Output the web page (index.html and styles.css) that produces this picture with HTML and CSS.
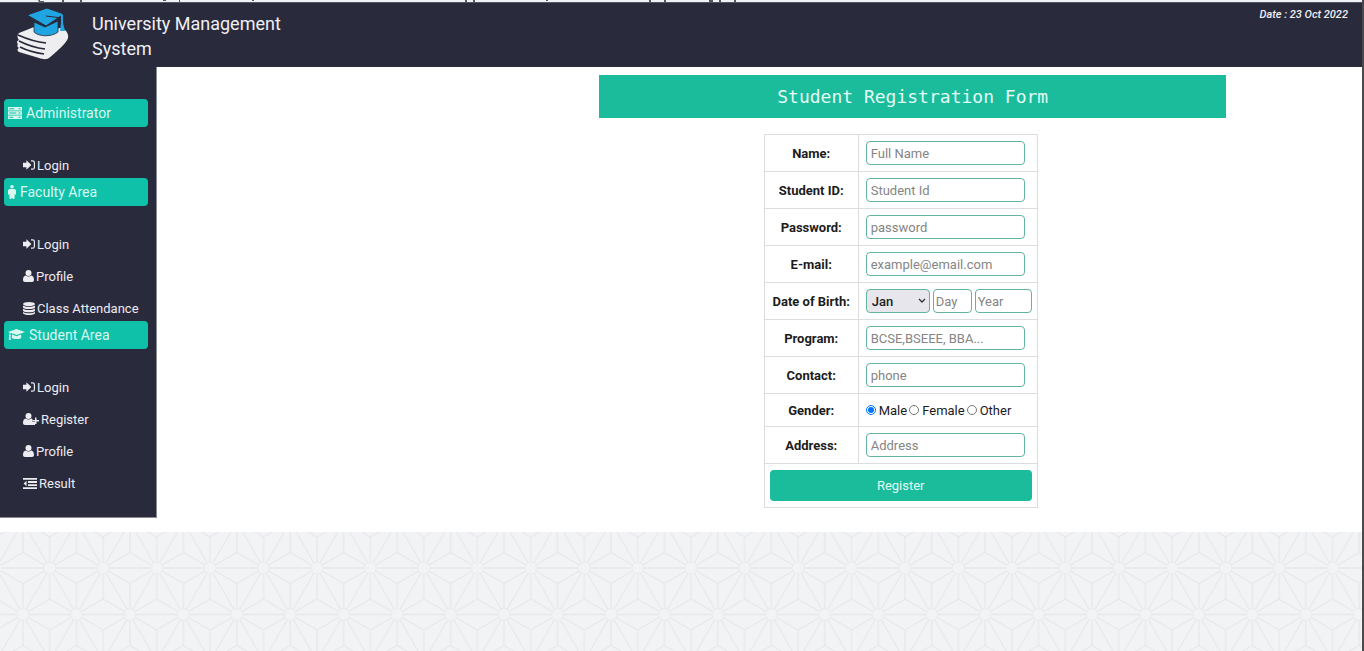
FILE: index.html
```html
<!DOCTYPE html>
<html lang="en">

<head>
    <meta charset="UTF-8">
    <meta name="viewport" content="width=device-width, initial-scale=1.0">
    <title>University Management System</title>
    <link rel="stylesheet" href="styles.css">
</head>

<body>
    <!-- Icons used in the sidebar -->
    <svg class="icon-defs" aria-hidden="true">
        <symbol id="icon-server" viewBox="0 0 14 12">
            <path fill-rule="evenodd" d="M0 0h14v3.4H0zM1.2 1.2v1h5v-1zM10.5 1.2v1h2v-1zM0 4.3h14v3.4H0zM1.2 5.5v1h7v-1zM10.5 5.5v1h2v-1zM0 8.6h14V12H0zM1.2 9.8v1h4v-1zM10.5 9.8v1h2v-1z" />
        </symbol>
        <symbol id="icon-male" viewBox="0 0 8 14">
            <circle cx="4" cy="1.8" r="1.8" />
            <path d="M2 4h4c1.200 0 2 .8 2 2v3c0 1-1.400 1-1.400 0v4c0 1.300-2.200 1.300-2.200 0h-.8c0 1.300-2.200 1.300-2.200 0V9C1.400 10 0 10 0 9V6c0-1.200.8-2 2-2z" />
        </symbol>
        <symbol id="icon-cap" viewBox="0 0 17 12">
            <path d="M8.500 0L17 3 8.500 6 3 4.100C2.500 4.500 2.300 5 2.300 5.800c.6.400.6 1 .1 1.400L3 11H.7l.6-3.800c-.5-.4-.5-1 .1-1.400 0-.8.100-1.400.5-2L0 3z" />
            <path d="M4 5.600l4.500 1.600L13 5.600l.3 2.900c-.8 2-8.800 2-9.600 0z" />
        </symbol>
        <symbol id="icon-login" viewBox="0 0 12 10">
            <path d="M0 2.800h3.400V.2L8.400 5 3.400 9.800V7.200H0z" />
            <path d="M8 .8h1.500c1.100 0 1.900.7 1.900 1.800v4.800c0 1.100-.8 1.800-1.900 1.800H8" fill="none" stroke="currentColor" stroke-width="1.200" />
        </symbol>
        <symbol id="icon-user" viewBox="0 0 11 12">
            <circle cx="5.500" cy="3" r="3" />
            <path d="M2.800 5.400c1.600 1.300 3.800 1.300 5.400 0C10 5.500 11 7.400 11 10c0 1.200-.8 2-2 2H2c-1.200 0-2-.8-2-2 0-2.600 1-4.500 2.800-4.600z" />
        </symbol>
        <symbol id="icon-user-plus" viewBox="0 0 16 12">
            <circle cx="5.500" cy="3" r="3" />
            <path d="M2.800 5.400c1.600 1.300 3.800 1.300 5.400 0 .5 0 .9.200 1.300.6V9H12v3H2c-1.200 0-2-.8-2-2 0-2.600 1-4.500 2.800-4.600z" />
            <path d="M12 4.500h1.500V7H16v1.500h-2.500V11H12V8.500H9.500V7H12z" />
        </symbol>
        <symbol id="icon-database" viewBox="0 0 12 13">
            <ellipse cx="6" cy="2" rx="6" ry="2" />
            <path d="M0 3.400c2 1.700 10 1.700 12 0v2c-1 2-11 2-12 0zM0 6.700c2 1.700 10 1.700 12 0v2c-1 2-11 2-12 0zM0 10c2 1.700 10 1.700 12 0v1.200c-1 2.400-11 2.400-12 0z" />
        </symbol>
        <symbol id="icon-list" viewBox="0 0 14 11">
            <path d="M0 0h14v1.800H0zM5 3.100h9v1.800H5zM5 6.200h9v1.800H5zM0 9.200h14V11H0zM3.600 2.800v5.400L.6 5.500z" />
        </symbol>
    </svg>

    <div class="page">
        <svg class="top-strip" aria-hidden="true">
            <path d="M38 0h2v1h4v1h-5zM62 0h2v2h-2zM80 0h2v2h-2zM163 0h3v1h-3zM179 0h1v2h-1zM252 0h2v1h-2zM465 0h2v2h-2zM473 0h2v2h-2zM546 0h2v1h-2zM649 0h2v2h-2zM664 0h2v2h-2zM709 0h4v2h-4zM719 0h2v2h-2zM734 0h2v2h-2z" />
        </svg>

        <header class="header">
            <svg class="logo" viewBox="0 0 52 52" role="img" aria-label="Logo">
                <path fill="#eeedf0" d="M2 25l15-6c6 8 17 8 25 1 6 0 10 5 9 10-1 5-13 15-19 20-3 2-7 1-10 0L2 44c-2-1-2-3 0-4-2-1-2-3-1-4-2-2-1-3 1-4-2-2-2-5 0-7z" />
                <path fill="none" stroke="#28283a" stroke-width="1.600" d="M1 27c9 4 18 7 28 8M2 33c8 4 17 7 26 8M3 39c8 4 16 6 24 7" />
                <path fill="#1fa5e2" stroke="#28283a" stroke-width=".8" d="M17 14v10c5 5 18 5 24 0V13l-13 6z" />
                <path fill="#1fa5e2" stroke="#28283a" d="M10 7L30 0l17 6-18 12z" />
                <path fill="none" stroke="#28283a" d="M29 8l16 2" />
                <path fill="#1fa5e2" d="M44 7h2v8l2 8h-5l1-8z" />
            </svg>
            <div class="site-title">University Management System</div>
            <div class="date">Date : 23 Oct 2022</div>
        </header>

        <div class="main">
            <nav class="sidebar">
                <button type="button" class="menu-title"><svg width="14" height="12"><use href="#icon-server" /></svg>Administrator</button>
                <ul>
                    <li><a href="#"><svg width="12" height="10"><use href="#icon-login" /></svg>Login</a></li>
                </ul>

                <button type="button" class="menu-title"><svg width="8" height="14"><use href="#icon-male" /></svg>Faculty Area</button>
                <ul>
                    <li><a href="#"><svg width="12" height="10"><use href="#icon-login" /></svg>Login</a></li>
                    <li><a href="#"><svg width="11" height="12"><use href="#icon-user" /></svg>Profile</a></li>
                    <li><a href="#"><svg width="12" height="13"><use href="#icon-database" /></svg>Class Attendance</a></li>
                </ul>

                <button type="button" class="menu-title"><svg width="17" height="12"><use href="#icon-cap" /></svg>Student Area</button>
                <ul>
                    <li><a href="#"><svg width="12" height="10"><use href="#icon-login" /></svg>Login</a></li>
                    <li><a href="#"><svg width="16" height="12"><use href="#icon-user-plus" /></svg>Register</a></li>
                    <li><a href="#"><svg width="11" height="12"><use href="#icon-user" /></svg>Profile</a></li>
                    <li><a href="#"><svg width="14" height="11"><use href="#icon-list" /></svg>Result</a></li>
                </ul>
            </nav>

            <main class="content">
                <h1>Student Registration Form</h1>
                <form>
                    <table>
                        <tr>
                            <th><label for="name">Name:</label></th>
                            <td><input type="text" id="name" placeholder="Full Name"></td>
                        </tr>
                        <tr>
                            <th><label for="sid">Student ID:</label></th>
                            <td><input type="text" id="sid" placeholder="Student Id"></td>
                        </tr>
                        <tr>
                            <th><label for="password">Password:</label></th>
                            <td><input type="password" id="password" placeholder="password"></td>
                        </tr>
                        <tr>
                            <th><label for="email">E-mail:</label></th>
                            <td><input type="email" id="email" placeholder="example@email.com"></td>
                        </tr>
                        <tr>
                            <th><label for="month">Date of Birth:</label></th>
                            <td>
                                <div class="dob">
                                    <select id="month">
                                        <option>Jan</option>
                                        <option>Feb</option>
                                        <option>Mar</option>
                                        <option>Apr</option>
                                        <option>May</option>
                                        <option>Jun</option>
                                        <option>Jul</option>
                                        <option>Aug</option>
                                        <option>Sep</option>
                                        <option>Oct</option>
                                        <option>Nov</option>
                                        <option>Dec</option>
                                    </select>
                                    <input type="text" class="day" aria-label="Day" placeholder="Day">
                                    <input type="text" class="year" aria-label="Year" placeholder="Year">
                                </div>
                            </td>
                        </tr>
                        <tr>
                            <th><label for="program">Program:</label></th>
                            <td><input type="text" id="program" placeholder="BCSE,BSEEE, BBA..."></td>
                        </tr>
                        <tr>
                            <th><label for="contact">Contact:</label></th>
                            <td><input type="text" id="contact" placeholder="phone"></td>
                        </tr>
                        <tr>
                            <th>Gender:</th>
                            <td>
                                <div class="gender">
                                    <label><input type="radio" name="gender" checked>Male</label>
                                    <label><input type="radio" name="gender">Female</label>
                                    <label><input type="radio" name="gender">Other</label>
                                </div>
                            </td>
                        </tr>
                        <tr>
                            <th><label for="address">Address:</label></th>
                            <td><input type="text" id="address" placeholder="Address"></td>
                        </tr>
                        <tr>
                            <td colspan="2" class="submit"><button type="submit">Register</button></td>
                        </tr>
                    </table>
                </form>
            </main>
        </div>

        <!-- Star pattern below the page -->
        <svg class="pattern" aria-hidden="true">
            <defs>
                <pattern id="stars" x="-3.700" y="36" width="53.450" height="93" patternUnits="userSpaceOnUse">
                    <g fill="none" stroke="#e7e8ea" stroke-width="1.300">
                        <path d="M0 0H53.450M0 46.500H53.450M0 93H53.450M0 0L53.450 93M53.450 0L0 93" />
                        <path d="M0 0L26.700 15.500 53.450 0M26.700 15.500V46.500M0 0V31M53.450 0V31" />
                        <path d="M0 31L26.700 46.500 53.450 31M0 62L26.700 46.500 53.450 62" />
                        <path d="M0 62V93M53.450 62V93M26.700 46.500V77.500M0 93L26.700 77.500 53.450 93" />
                    </g>
                    <g fill="#f2f3f5" stroke="#e9eaec">
                        <circle cx="0" cy="0" r="6" />
                        <circle cx="53.450" cy="0" r="6" />
                        <circle cx="26.700" cy="46.500" r="6" />
                        <circle cx="0" cy="93" r="6" />
                        <circle cx="53.450" cy="93" r="6" />
                    </g>
                </pattern>
            </defs>
            <rect width="100%" height="100%" fill="url(#stars)" />
        </svg>
    </div>
</body>

</html>
```
FILE: styles.css
```css
* {
    box-sizing: border-box;
}

body {
    margin: 0;
    font-family: Roboto, sans-serif;
    font-size: 13px;
    color: #1c1c1c;
    background: #f2f3f5;
}

.icon-defs {
    display: none;
}

.page {
    display: flex;
    flex-direction: column;
    min-height: 100vh;
    border-right: 2px solid #4a4a4c;
}

.top-strip {
    display: block;
    width: 100%;
    height: 3px;
    background: #eef1f6;
    fill: #55565c;
    border-bottom: 1px solid #55565f;
}

/* Header */
.header {
    display: flex;
    align-items: flex-start;
    height: 64px;
    padding: 5px 14px 0 17px;
    background: #2a2a3d;
    color: #f0f0f3;
}

.logo {
    width: 52px;
    height: 52px;
}

.site-title {
    width: 200px;
    margin: 3px 0 0 23px;
    font-size: 18px;
    line-height: 25px;
}

.date {
    margin-left: auto;
    font-size: 11px;
    font-style: italic;
    font-weight: 500;
    line-height: 14px;
}

/* Sidebar */
.main {
    display: flex;
    align-items: flex-start;
    padding-bottom: 14px;
    background: #fff;
}

.sidebar {
    flex: none;
    width: 157px;
    padding: 32px 8px 21px 4px;
    background: #2a2a3d;
    border-right: 1px solid #8a8a94;
    border-bottom: 1px solid #8a8a94;
}

.sidebar svg {
    flex: none;
    fill: currentColor;
}

.menu-title {
    display: flex;
    align-items: center;
    gap: 4px;
    width: 100%;
    height: 28px;
    padding: 0 4px;
    border: 0;
    border-radius: 4px;
    background: #10c1aa;
    color: #d8f8f0;
    font-family: inherit;
    font-size: 14px;
}

.sidebar ul {
    display: flex;
    flex-direction: column;
    gap: 8px;
    margin: 0;
    padding: 26px 0 1px 19px;
    list-style: none;
}

.sidebar a {
    display: flex;
    align-items: center;
    gap: 2px;
    height: 24px;
    color: #ececf1;
    font-size: 13px;
    text-decoration: none;
    white-space: nowrap;
}

/* Registration form */
.content {
    flex: 1;
    padding-top: 8px;
}

.content h1,
.content form {
    width: 52%;
    margin: 0 136px 0 auto;
}

.content h1 {
    margin-bottom: 16px;
    background: #1abc9c;
    color: #e2fbf4;
    font-family: "DejaVu Sans Mono", monospace;
    font-size: 18px;
    font-weight: normal;
    line-height: 43px;
    text-align: center;
}

.content form {
    padding-right: 24px;
}

table {
    margin: 0 auto;
    border-collapse: collapse;
}

th,
td {
    padding: 6px 5px 6px 7px;
    border: 1px solid #dddddf;
}

th {
    width: 94px;
    padding: 0;
    font-weight: 700;
    white-space: nowrap;
}

td input,
select {
    display: block;
    width: 159px;
    height: 24px;
    padding: 0 4px;
    border: 1px solid #62b39f;
    border-radius: 4px;
    background: #fff;
    color: #1c1c1c;
    font-family: inherit;
    font-size: 13px;
}

input::placeholder {
    color: #858585;
}

.dob {
    display: flex;
    gap: 3px;
}

.dob select {
    appearance: none;
    width: 64px;
    padding: 0 5px;
    background: #e6e6ec url("data:image/svg+xml,%3Csvg xmlns='http://www.w3.org/2000/svg' width='8' height='6'%3E%3Cpath d='M1 1l3 3 3-3' fill='none' stroke='%23333' stroke-width='1.3'/%3E%3C/svg%3E") no-repeat right 3px center;
    font-weight: 500;
}

.dob .day {
    width: 39px;
    padding: 0 2px;
}

.dob .year {
    width: 57px;
    padding: 0 2px;
}

.gender {
    display: flex;
    gap: 2px;
    height: 20px;
}

.gender label {
    display: flex;
    align-items: center;
    gap: 3px;
}

.gender input {
    width: 10px;
    height: 10px;
    margin: 0;
}

.submit {
    padding: 6px 5px;
}

.submit button {
    display: block;
    width: 100%;
    height: 31px;
    border: 0;
    border-radius: 4px;
    background: #1abc9c;
    color: #e2fbf4;
    font-family: inherit;
    font-size: 13px;
}

.pattern {
    flex: 1;
    display: block;
    width: 100%;
    min-height: 119px;
}
```
